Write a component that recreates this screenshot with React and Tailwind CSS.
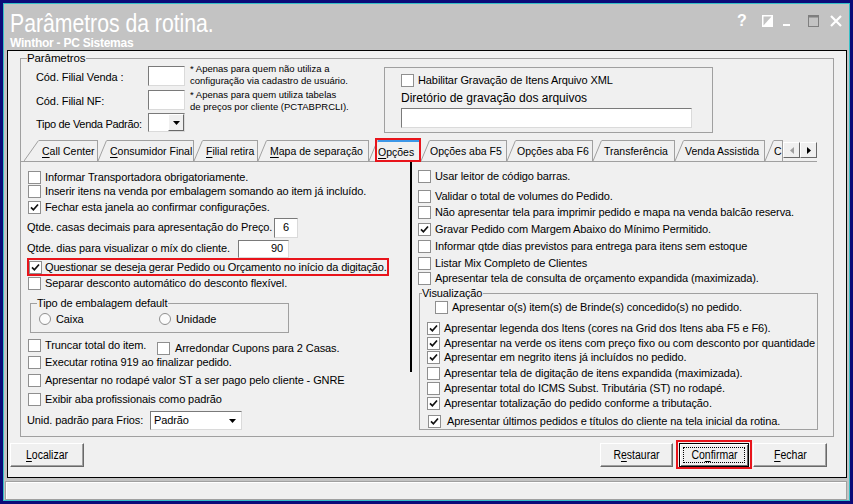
import React from 'react'

const SANS = "font-['Liberation_Sans',Arial,sans-serif]"

const tabs = [
  { label: 'Call Center', u: true, w: 'w-[74px]', slant: 15, pl: 'pl-[3px]' },
  { label: 'Consumidor Final', u: true, w: 'w-[96px]', slant: 9, pl: 'pl-[3px]' },
  { label: 'Filial retira', u: true, w: 'w-[64px]', slant: 9, pl: 'pl-[3px]' },
  { label: 'Mapa de separação', u: true, w: 'w-[111px]', slant: 9, pl: 'pl-[3px]' },
  { label: 'Opções', u: true, w: 'w-[52px]', slant: 9, pl: 'pl-[0px]', active: true },
  { label: 'Opções aba F5', w: 'w-[86px]', slant: 9, pl: 'pl-[0px]' },
  { label: 'Opções aba F6', w: 'w-[86px]', slant: 9, pl: 'pl-[1px]' },
  { label: 'Transferência', w: 'w-[82px]', slant: 9, pl: 'pl-[2px]' },
  { label: 'Venda Assistida', w: 'w-[90px]', slant: 9, pl: 'pl-[1px]' },
  { label: 'C', w: 'w-[18px]', slant: 9, pl: 'pl-[0px]' },
]

function Check({ checked }) {
  return (
    <span className="flex h-[13px] w-[13px] shrink-0 items-center justify-center border border-[#8f8f8f] bg-white">
      {checked && (
        <svg width="9" height="9" viewBox="0 0 9 9">
          <path d="M1 4.3 L3.4 6.8 L8 1.5" fill="none" stroke="#111" strokeWidth="1.7" />
        </svg>
      )}
    </span>
  )
}

function CheckRow({ checked, children, className = '', gap = 'gap-[4px]' }) {
  return (
    <div className={`flex h-[14px] items-center whitespace-nowrap ${gap} ${className}`}>
      <Check checked={checked} />
      <span className="leading-[14px]">{children}</span>
    </div>
  )
}

function Radio({ children }) {
  return (
    <div className="flex h-[14px] items-center gap-[5px] whitespace-nowrap">
      <span className="h-[12px] w-[12px] shrink-0 rounded-full border border-[#8f8f8f] bg-[#fbfbfb]" />
      <span>{children}</span>
    </div>
  )
}

function Field({ className = '', children }) {
  return (
    <div className={`border border-t-[#7a7a7a] border-l-[#7a7a7a] border-r-[#dadada] border-b-[#dadada] bg-white ${className}`}>
      {children}
    </div>
  )
}

function DownArrow({ color = '#000' }) {
  return (
    <svg width="7" height="4" viewBox="0 0 7 4">
      <path d="M0 0h7L3.5 4z" fill={color} />
    </svg>
  )
}

function Tab({ t }) {
  return (
    <div className={`relative flex h-[21px] shrink-0 ${t.w}`}>
      <svg width={t.slant} height="21" className="shrink-0">
        <path d={`M0 21 L${t.slant - 0.5} 0.5`} stroke="#a0a0a0" fill="none" />
      </svg>
      <div
        className={`flex flex-1 items-center overflow-hidden whitespace-nowrap border-r border-r-[#a0a0a0] pt-[2px] text-[10.5px] tracking-normal ${
          t.active ? 'border-t-2 border-t-[#3c97e8]' : 'border-t border-t-[#a0a0a0]'
        } ${t.pl}`}
      >
        {t.u ? (
          <>
            <span className="underline underline-offset-[2px]">{t.label[0]}</span>
            {t.label.slice(1)}
          </>
        ) : (
          t.label
        )}
      </div>
      {t.active && (
        <span className="pointer-events-none absolute left-[6px] top-[-2px] h-[24px] w-[46px] border-2 border-[#e8141b]" />
      )}
    </div>
  )
}

function WinButton({ className = '', children, focused }) {
  return (
    <div
      className={`relative flex h-[24px] items-center justify-center border bg-[#f0f0f0] text-[12.5px] tracking-normal ${
        focused
          ? 'border-black shadow-[inset_1px_1px_0_#fff,inset_-1px_-1px_0_#696969]'
          : 'border-t-white border-l-white border-r-[#696969] border-b-[#696969] shadow-[inset_-1px_-1px_0_#a0a0a0]'
      } ${className}`}
    >
      {focused && <span className="absolute inset-[3px] border border-dotted border-black" />}
      <span className="inline-block scale-x-[0.84] whitespace-nowrap">{children}</span>
    </div>
  )
}

export default function App() {
  return (
    <div className={`h-[504px] w-[853px] bg-[#0a0a78] p-[3px] text-[11px] tracking-[-0.1px] text-black ${SANS}`}>
      <div className="flex h-full flex-col border border-[#35bfc7] bg-[#c3c3c3]">
        {/* Title */}
        <div className="flex h-[46px] shrink-0">
          <div className="flex-1 pl-[6px] pt-[7px] tracking-normal text-white">
            <div className="h-[24px] origin-left scale-x-[0.815] whitespace-nowrap text-[26px] leading-[24px]">
              Parâmetros da rotina.
            </div>
            <div className="mt-[2px] whitespace-nowrap text-[12px] font-bold leading-[12px] tracking-[-0.25px]">
              Winthor - PC Sistemas
            </div>
          </div>
          <div className="mr-[7px] mt-[10px] flex h-[14px] items-center">
            <span className="w-[10px] text-[16px] font-bold leading-[14px] text-white">?</span>
            <svg width="11" height="12" viewBox="0 0 11 12" className="ml-[15px]">
              <rect x="0.75" y="0.75" width="9.5" height="10.5" fill="none" stroke="#fff" strokeWidth="1.5" />
              <path d="M1 11 L10 1 L10 11 Z" fill="#fff" />
            </svg>
            <svg width="8" height="12" viewBox="0 0 8 12" className="ml-[10px]">
              <rect x="0" y="9" width="7" height="2" fill="#fff" />
            </svg>
            <svg width="11" height="12" viewBox="0 0 11 12" className="ml-[17px]">
              <rect x="0.5" y="0.5" width="10" height="11" fill="none" stroke="#7f7f7f" />
              <rect x="0.5" y="0.5" width="10" height="2" fill="#7f7f7f" />
            </svg>
            <svg width="12" height="12" viewBox="0 0 12 12" className="ml-[11px]">
              <path d="M1 1 L11 11 M11 1 L1 11" stroke="#fff" strokeWidth="2.2" />
            </svg>
          </div>
        </div>

        {/* Main panel */}
        <div className="ml-[3px] mr-[2px] h-[428px] shrink-0 border border-black bg-[#f0f0f0]">
          {/* Parâmetros group */}
          <div className="relative ml-[12px] mt-[7px] h-[379px] w-[814px] border border-[#a0a0a0]">
            <span className="absolute left-[6px] top-[-7px] bg-[#f0f0f0] pr-[1px] text-[11.5px] leading-[13px]">
              Parâmetros
            </span>

            {/* Top section */}
            <div className="flex h-[81px]">
              <div className="w-[363px] pl-[15px] pt-[4px]">
                <div className="flex h-[25px] items-start">
                  <span className="mt-[8px] w-[112px] leading-[13px]">Cód. Filial Venda :</span>
                  <Field className="mt-[3px] h-[20px] w-[37px]" />
                  <div className="ml-[5px] text-[9.5px] leading-[11.5px] tracking-normal">
                    <div>* Apenas para quem não utiliza a</div>
                    <div>configuração via cadastro de usuário.</div>
                  </div>
                </div>
                <div className="flex h-[23px] items-start">
                  <span className="mt-[7px] w-[112px] leading-[13px]">Cód. Filial NF:</span>
                  <Field className="mt-[2px] h-[20px] w-[37px]" />
                  <div className="ml-[5px] mt-[1px] text-[9.5px] leading-[11.5px] tracking-normal">
                    <div>* Apenas para quem utiliza tabelas</div>
                    <div>de preços por cliente (PCTABPRCLI).</div>
                  </div>
                </div>
                <div className="flex h-[22px] items-start">
                  <span className="mt-[7px] w-[112px] whitespace-nowrap leading-[13px] tracking-[-0.3px]">
                    Tipo de Venda Padrão:
                  </span>
                  <Field className="mt-[2px] flex h-[19px] w-[37px] justify-end">
                    <div className="flex w-[16px] items-center justify-center border border-t-white border-l-white border-r-[#696969] border-b-[#696969] bg-[#f0f0f0]">
                      <DownArrow />
                    </div>
                  </Field>
                </div>
              </div>
              <div className="mt-[8px] h-[66px] w-[329px] border border-[#a0a0a0] pl-[16px] pt-[5px]">
                <CheckRow>Habilitar Gravação de Itens Arquivo XML</CheckRow>
                <div className="mt-[3px] h-[16px] text-[12px] leading-[16px] tracking-normal">
                  Diretório de gravação dos arquivos
                </div>
                <Field className="mt-[2px] h-[20px] w-[291px]" />
              </div>
            </div>

            {/* Tabs */}
            <div className="flex h-[22px] w-[796px] items-start border-b border-[#a0a0a0] pl-[3px]">
              {tabs.map((t) => (
                <Tab key={t.label} t={t} />
              ))}
              <div className="mt-[2px] flex h-[16px] w-[17px] items-center justify-center border border-t-white border-l-white border-r-[#696969] border-b-[#696969] bg-[#f0f0f0]">
                <svg width="4" height="7" viewBox="0 0 4 7">
                  <path d="M4 0v7L0 3.5z" fill="#a0a0a0" />
                </svg>
              </div>
              <div className="mt-[2px] flex h-[16px] w-[17px] items-center justify-center border border-t-white border-l-white border-r-[#696969] border-b-[#696969] bg-[#f0f0f0]">
                <svg width="4" height="7" viewBox="0 0 4 7">
                  <path d="M0 0v7L4 3.5z" fill="#000" />
                </svg>
              </div>
            </div>

            {/* Tab panel */}
            <div className="flex h-[274px]">
              {/* Left column */}
              <div className="w-[389px] pl-[7px] pt-[8px]">
                <CheckRow>Informar Transportadora obrigatoriamente.</CheckRow>
                <CheckRow>Inserir itens na venda por embalagem somando ao item já incluído.</CheckRow>
                <div className="flex h-[18px] items-center">
                  <CheckRow checked>Fechar esta janela ao confirmar configurações.</CheckRow>
                </div>
                <div className="-ml-[1px] flex h-[23px] items-center">
                  <span className="w-[247px] whitespace-nowrap">Qtde. casas decimais para apresentação do Preço.</span>
                  <Field className="flex h-[20px] w-[24px] items-center justify-center">6</Field>
                </div>
                <div className="-ml-[1px] flex h-[19px] items-center">
                  <span className="w-[211px] whitespace-nowrap">Qtde. dias para visualizar o míx do cliente.</span>
                  <Field className="flex h-[18px] w-[51px] items-center justify-end pr-[5px]">90</Field>
                </div>
                <div className="-ml-[1px] flex h-[18px] w-[362px] items-center border-2 border-[#e8141b] tracking-[-0.15px]">
                  <CheckRow checked gap="gap-[3px]">
                    Questionar se deseja gerar Pedido ou Orçamento no início da digitação.
                  </CheckRow>
                </div>
                <CheckRow>Separar desconto automático do desconto flexível.</CheckRow>

                <div className="relative ml-[2px] mt-[13px] h-[30px] w-[259px] border border-[#a0a0a0] pt-[8px]">
                  <span className="absolute left-[6px] top-[-7px] bg-[#f0f0f0] pr-[1px] leading-[13px]">
                    Tipo de embalagem default
                  </span>
                  <div className="flex pl-[8px]">
                    <div className="w-[120px]">
                      <Radio>Caixa</Radio>
                    </div>
                    <Radio>Unidade</Radio>
                  </div>
                </div>

                <div className="mt-[5px] flex h-[15px] items-start">
                  <div className="w-[129px]">
                    <CheckRow>Truncar total do item.</CheckRow>
                  </div>
                  <CheckRow className="mt-[3px]" gap="gap-[5px]">Arredondar Cupons para 2 Casas.</CheckRow>
                </div>
                <CheckRow className="mt-[2px]">Executar rotina 919 ao finalizar pedido.</CheckRow>
                <CheckRow className="mt-[4px]">Apresentar no rodapé valor ST a ser pago pelo cliente - GNRE</CheckRow>
                <CheckRow className="mt-[5px]">Exibir aba profissionais como padrão</CheckRow>
                <div className="-ml-[1px] mt-[5px] flex h-[19px] items-center">
                  <span className="w-[123px] whitespace-nowrap">Unid. padrão para Frios:</span>
                  <Field className="flex h-[19px] w-[92px] items-center justify-between pl-[3px] pr-[5px]">
                    <span>Padrão</span>
                    <DownArrow />
                  </Field>
                </div>
              </div>

              <div className="h-[210px] w-[2px] shrink-0 bg-black" />

              {/* Right column */}
              <div className="flex-1 pl-[6px] pt-[7px]">
                <CheckRow>Usar leitor de código barras.</CheckRow>
                <CheckRow className="mt-[6px]">Validar o total de volumes do Pedido.</CheckRow>
                <CheckRow className="mt-[2px]">Não apresentar tela para imprimir pedido e mapa na venda balcão reserva.</CheckRow>
                <CheckRow className="mt-[3px]" checked>Gravar Pedido com Margem Abaixo do Mínimo Permitido.</CheckRow>
                <CheckRow className="mt-[3px]">Informar qtde dias previstos para entrega para itens sem estoque</CheckRow>
                <CheckRow className="mt-[3px]">Listar Mix Completo de Clientes</CheckRow>
                <CheckRow className="mt-[1px]">Apresentar tela de consulta de orçamento expandida (maximizada).</CheckRow>

                <div className="relative ml-[1px] mt-[8px] h-[137px] w-[399px] border border-[#a0a0a0] pt-[6px]">
                  <span className="absolute left-[2px] top-[-7px] bg-[#f0f0f0] pr-[1px] leading-[13px]">Visualização</span>
                  <CheckRow className="pl-[15px]">Apresentar o(s) item(s) de Brinde(s) concedido(s) no pedido.</CheckRow>
                  <div className="mt-[7px] pl-[7px]">
                    <CheckRow checked>Apresentar legenda dos Itens (cores na Grid dos Itens aba F5 e F6).</CheckRow>
                    <CheckRow className="mt-[1px]" checked>
                      Apresentar na verde os itens com preço fixo ou com desconto por quantidade
                    </CheckRow>
                    <CheckRow checked>Apresentar em negrito itens já incluídos no pedido.</CheckRow>
                    <CheckRow className="mt-[2px]">Apresentar tela de digitação de itens expandida (maximizada).</CheckRow>
                    <CheckRow className="mt-[1px]">Apresentar total do ICMS Subst. Tributária (ST) no rodapé.</CheckRow>
                    <CheckRow className="mt-[1px]" checked>Apresentar totalização do pedido conforme a tributação.</CheckRow>
                  </div>
                  <CheckRow className="mt-[4px] pl-[8px]" checked gap="gap-[6px]">
                    Apresentar últimos pedidos e títulos do cliente na tela inicial da rotina.
                  </CheckRow>
                </div>
              </div>
            </div>
          </div>

          {/* Buttons */}
          <div className="mt-[6px] flex h-[24px] pl-[2px] pr-[19px]">
            <WinButton className="w-[74px]">
              <span className="underline underline-offset-[2px]">L</span>ocalizar
            </WinButton>
            <WinButton className="ml-auto w-[73px]">
              R<span className="underline underline-offset-[2px]">e</span>staurar
            </WinButton>
            <div className="relative ml-[6px]">
              <WinButton className="w-[70px]" focused>
                Co<span className="underline underline-offset-[2px]">n</span>firmar
              </WinButton>
              <span className="pointer-events-none absolute left-[-3px] top-[-3px] h-[29px] w-[76px] border-2 border-[#e8141b]" />
            </div>
            <WinButton className="ml-[4px] w-[74px]">
              <span className="underline underline-offset-[2px]">F</span>echar
            </WinButton>
          </div>
        </div>

        {/* Status bar */}
        <div className="ml-[1px] mr-[2px] mt-[3px] h-[19px] shrink-0 border border-[#a0a0a0] bg-[#f0f0f0] shadow-[inset_1px_1px_0_#fff]" />
      </div>
    </div>
  )
}
